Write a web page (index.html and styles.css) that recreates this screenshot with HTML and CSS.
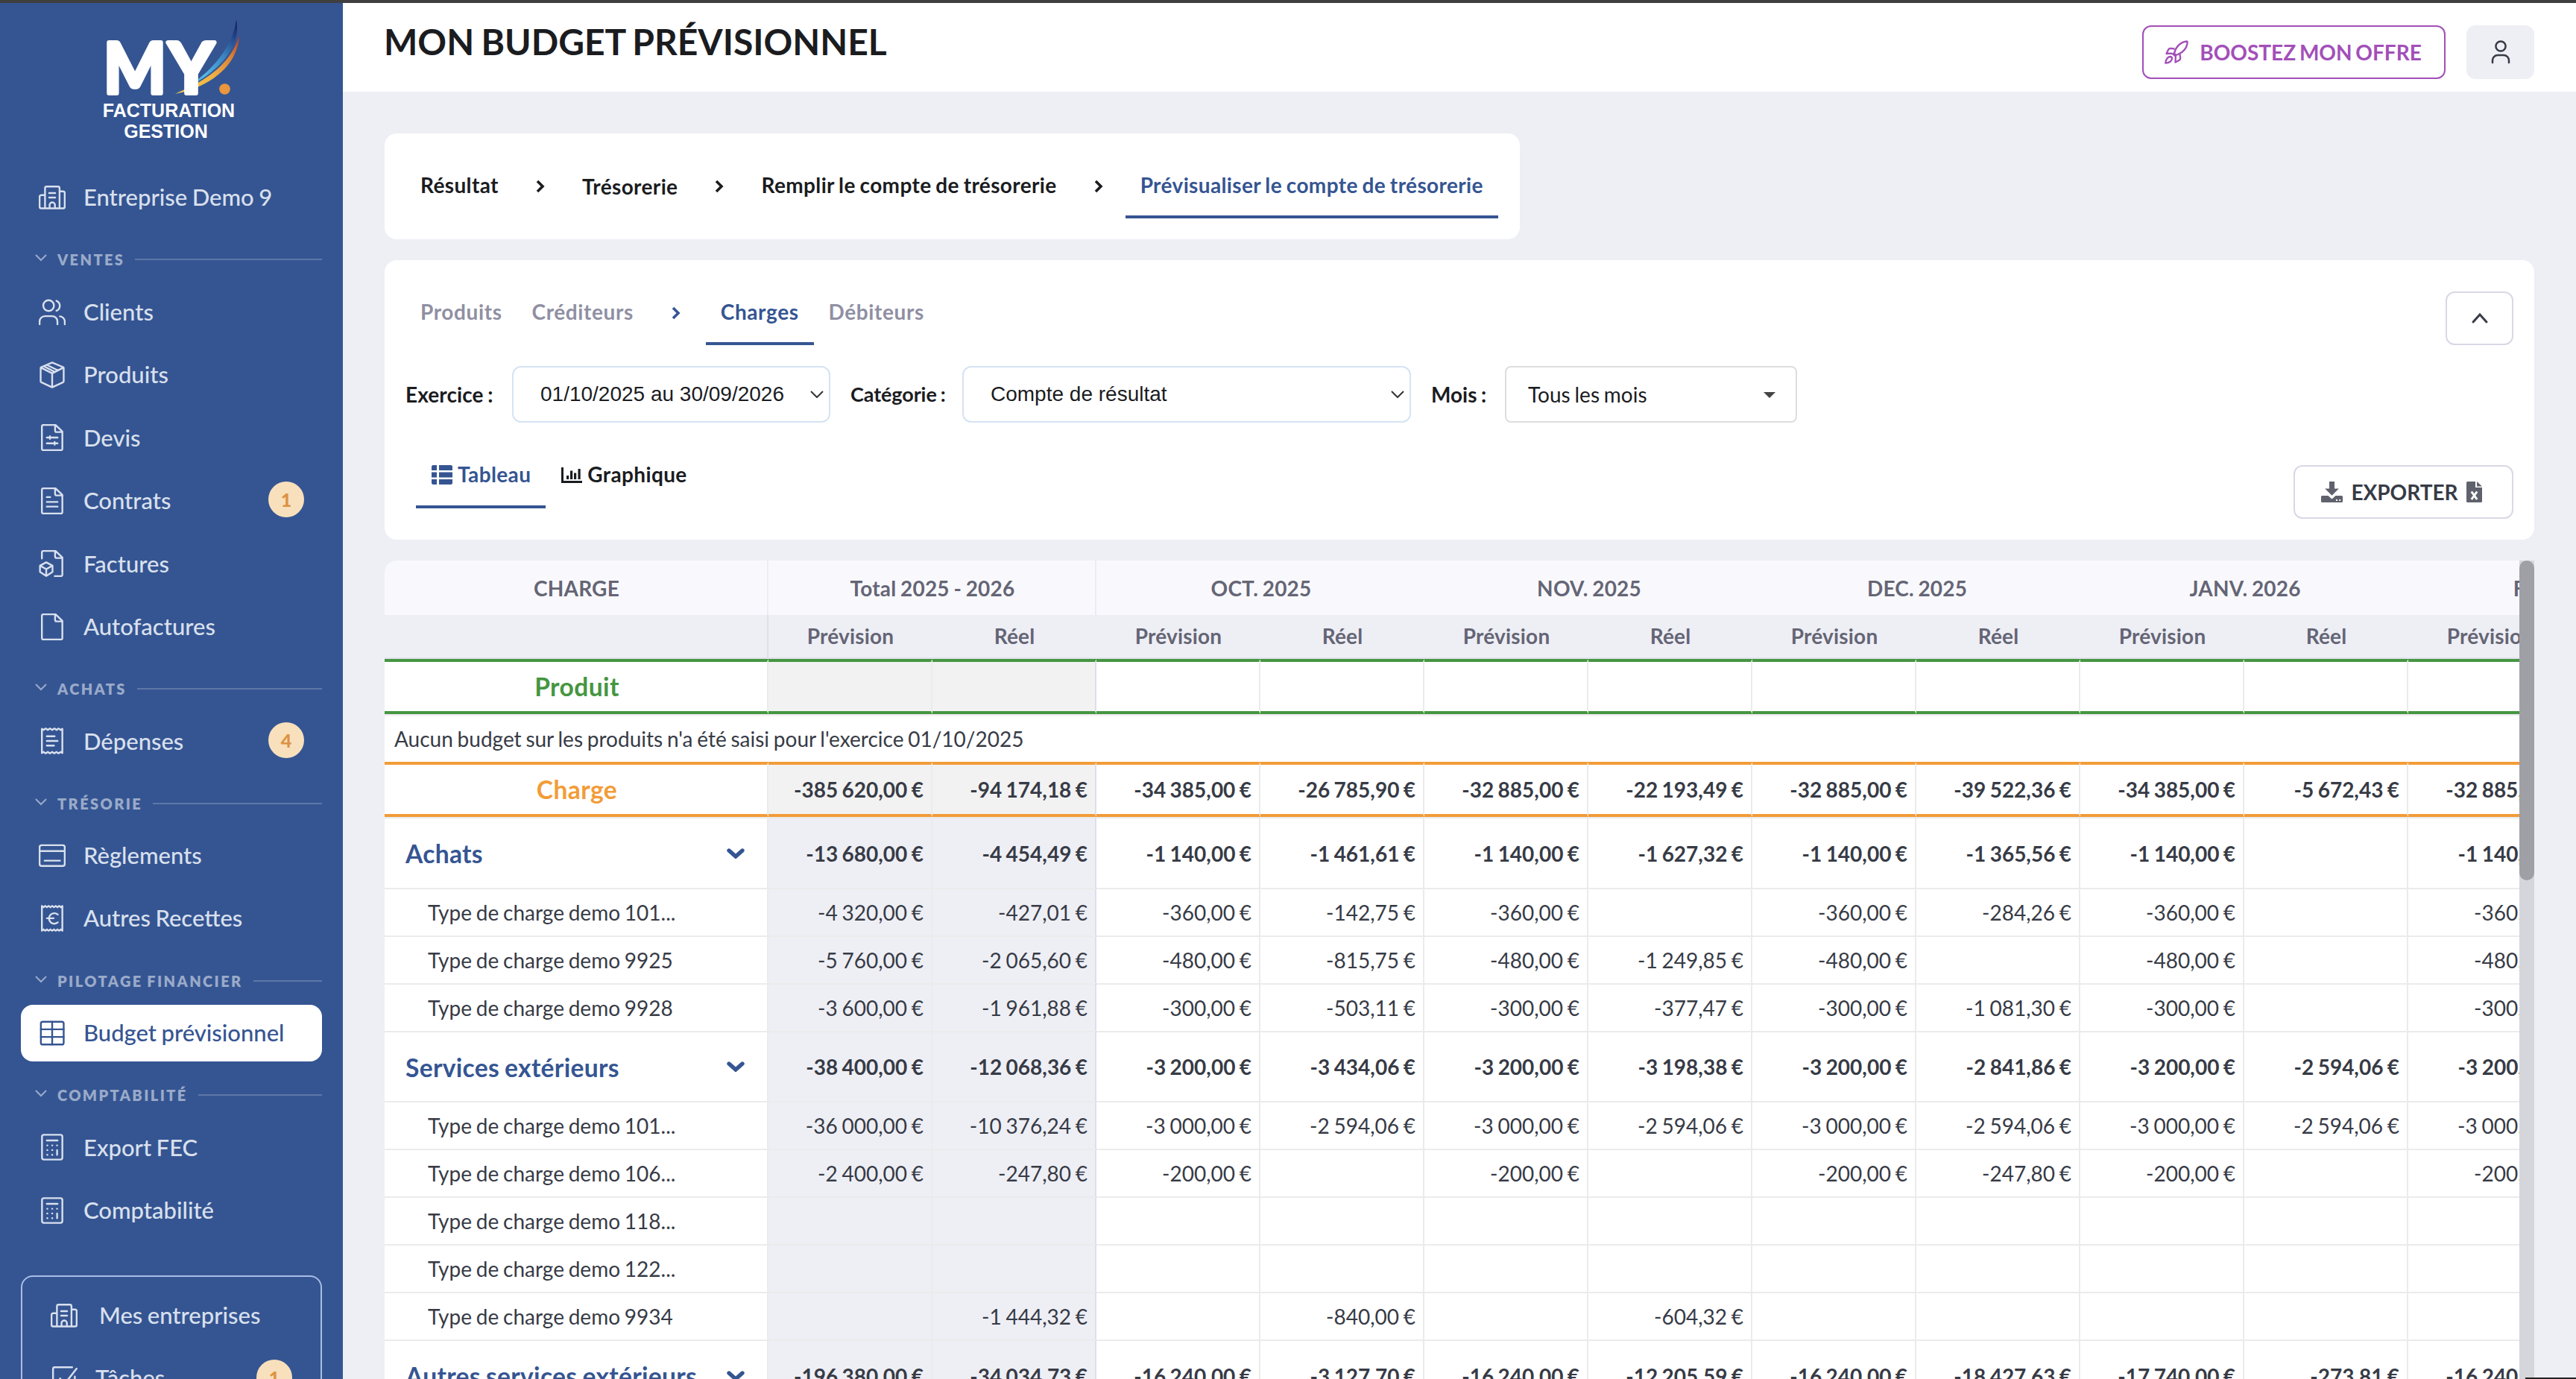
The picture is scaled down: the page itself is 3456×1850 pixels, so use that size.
FILE: index.html
```html
<!DOCTYPE html>
<html lang="fr">
<head>
    <meta charset="UTF-8">
    <meta name="viewport" content="width=device-width, initial-scale=1.0">
    <title>Mon budget prévisionnel</title>
    <link rel="stylesheet" href="styles.css">
</head>
<body>

<!-- Icons -->
<svg class="sprite" xmlns="http://www.w3.org/2000/svg">
    <symbol id="i-building" viewBox="0 0 24 24">
        <path d="M5.6 21.7V3.7a1.5 1.5 0 0 1 1.5-1.5h10a1.5 1.5 0 0 1 1.5 1.5v18M5.6 9.8H2.2A1.5 1.5 0 0 0 .75 11.3v8.9a1.5 1.5 0 0 0 1.5 1.5h19.5a1.5 1.5 0 0 0 1.5-1.5V8a1.5 1.5 0 0 0-1.5-1.5h-3.1M9.3 8h5.4M9.3 12h5.4M9.7 21.7v-3a2.4 2.4 0 0 1 4.8 0v3"/>
    </symbol>
    <symbol id="i-users" viewBox="0 0 24 24">
        <circle cx="8.8" cy="6" r="4.8"/>
        <path d="M.75 22.7v-2.5A4.8 4.8 0 0 1 5.5 15.4h6.4a4.8 4.8 0 0 1 4.8 4.8v2.5M15.8 1.7a4.8 4.8 0 0 1 0 8.9M18.9 15.6a4.8 4.8 0 0 1 4.4 4.8v2.3"/>
    </symbol>
    <symbol id="i-box" viewBox="0 0 24 24">
        <path d="M12 .9 21.7 5a.9.9 0 0 1 .6.9v11.8a1 1 0 0 1-.6.9L12 23.1l-9.7-4.5a1 1 0 0 1-.6-.9V5.900a.9.9 0 0 1 .6-.9zM1.900 5.400 12 10.600l10.100-5.200M12 10.600v12.300M17.300 8 7.200 3M14.500 9.400 4.500 4.200"/>
    </symbol>
    <symbol id="i-file" viewBox="0 0 24 24">
        <path d="M21.1 22.1a1.2 1.2 0 0 1-1.2 1.2H4a1.2 1.2 0 0 1-1.2-1.2V1.9A1.2 1.2 0 0 1 4 .75h11L21.1 6.6zM14.6.9v5a1.2 1.2 0 0 0 1.2 1.2h5.1"/>
    </symbol>
    <symbol id="i-quote" viewBox="0 0 24 24">
        <path d="M21.1 22.1a1.2 1.2 0 0 1-1.2 1.2H4a1.2 1.2 0 0 1-1.2-1.2V1.9A1.2 1.2 0 0 1 4 .75h11L21.1 6.6zM14.6.9v5a1.2 1.2 0 0 0 1.2 1.2h5.1M7.2 12h9.6M7.2 17.2h9.6M10 10.8v2.4M14.2 16v2.4"/>
    </symbol>
    <symbol id="i-contract" viewBox="0 0 24 24">
        <path d="M21.1 22.1a1.2 1.2 0 0 1-1.2 1.2H4a1.2 1.2 0 0 1-1.2-1.2V1.9A1.2 1.2 0 0 1 4 .75h11L21.1 6.6zM14.6.9v5a1.2 1.2 0 0 0 1.2 1.2h5.1M7.2 8.6h3M7.2 12.9h9.6M7.2 17.1h9.6"/>
    </symbol>
    <symbol id="i-invoice" viewBox="0 0 24 24">
        <path d="M2.8 7.5V1.9A1.2 1.2 0 0 1 4 .75h11l6.1 5.9v15.4a1.2 1.2 0 0 1-1.2 1.2h-5.6M14.6.9v5a1.2 1.2 0 0 0 1.2 1.2h5.1M6.7 10.9l5.6 3v5.6l-5.6 3.6-5.6-3.6v-5.6zM1.3 14l5.4 3 5.4-3M6.7 17v6"/>
    </symbol>
    <symbol id="i-receipt" viewBox="0 0 24 24">
        <path d="M2.8 1.2v21.6l1.5-1 1.9 1.3 1.9-1.3 1.9 1.3 2-1.3 1.9 1.3 1.9-1.3 1.9 1.3 1.9-1.3 1.5 1V1.2l-1.5 1L17.8.9l-1.9 1.3L14 .9l-2 1.3L10 .9 8.1 2.2 6.2.9 4.3 2.2zM7.2 7.8h7M7.2 12h9.6M7.2 16.2h6.4"/>
    </symbol>
    <symbol id="i-receipt-euro" viewBox="0 0 24 24">
        <path d="M2.8.9v22.2l1.5-1.2 1.5 1.2 1.5-1.2 1.5 1.2 1.6-1.2L12 23.1l1.6-1.2 1.6 1.2 1.5-1.2 1.5 1.2 1.5-1.2 1.4 1.2V.9l-1.4 1.2L18.2.9l-1.5 1.2L15.2.9l-1.6 1.2L12 .9l-1.6 1.2L8.8.9 7.3 2.1 5.8.9 4.3 2.1zM17 8.6a4.7 4.7 0 1 0 0 7M7.3 11.9h6"/>
    </symbol>
    <symbol id="i-card" viewBox="0 0 24 24">
        <rect x=".75" y="2.6" width="22.5" height="18.6" rx="1.8"/>
        <path d="M.75 7.8h22.5M5.2 16.4h13.8"/>
    </symbol>
    <symbol id="i-table" viewBox="0 0 24 24">
        <rect x="1.9" y="1.8" width="20.4" height="20.4" rx="1.6"/>
        <path d="M1.9 8.6h20.4M1.9 15.4h20.4M12 1.8v20.4"/>
    </symbol>
    <symbol id="i-calc" viewBox="0 0 24 24">
        <rect x="2.9" y=".9" width="18.2" height="22.2" rx="1.7"/>
        <path d="M7.2 6h9.6M7.6 10.4h.1M12 10.4h.1M16.3 10.4h.1M7.6 14.6h.1M12 14.6h.1M16.4 14.6v4.2M7.6 18.8h.1M12 18.8h.1"/>
    </symbol>
    <symbol id="i-task" viewBox="0 0 24 24">
        <path d="M21.6 10.5v11a1.5 1.5 0 0 1-1.5 1.5H3.6a1.5 1.5 0 0 1-1.5-1.5V3.7a1.5 1.5 0 0 1 1.5-1.5h15.6M23.2 3.4 12.2 17.4 8.4 12.2"/>
    </symbol>
    <symbol id="i-down" viewBox="0 0 16 10">
        <path d="M1.5 1.5 8 8l6.5-6.5"/>
    </symbol>
    <symbol id="i-next" viewBox="0 0 14 20">
        <path d="M3 3l7 7-7 7"/>
    </symbol>
    <symbol id="i-toggle" viewBox="0 0 24 14">
        <path d="M3 3l9 8 9-8"/>
    </symbol>
</svg>

<div class="top-line"></div>

<div class="app">

    <!-- Sidebar -->
    <aside class="sidebar">
        <svg class="logo" viewBox="0 0 200 180">
            <defs>
                <linearGradient id="blue" x1="0" y1="1" x2="1" y2="0">
                    <stop offset="0" stop-color="#4fa3b5"/>
                    <stop offset=".35" stop-color="#55b9e8"/>
                    <stop offset=".65" stop-color="#3a82c0"/>
                    <stop offset="1" stop-color="#141a60"/>
                </linearGradient>
                <linearGradient id="orange" x1="0" y1="1" x2="1" y2="0">
                    <stop offset="0" stop-color="#f3d04f"/>
                    <stop offset=".45" stop-color="#efb044"/>
                    <stop offset=".75" stop-color="#d98339"/>
                    <stop offset="1" stop-color="#b83a20"/>
                </linearGradient>
            </defs>
            <path fill="url(#blue)" d="M105 119C140 104 182 64 187 20c5 24-7 48-28 66-14 13-31 22-54 33z"/>
            <path fill="url(#orange)" d="M105 120C146 102 178 82 191 42c-2 38-36 68-86 78z"/>
            <text class="logo-my" x="9" y="119" textLength="84" lengthAdjust="spacingAndGlyphs">M</text>
            <text class="logo-my" x="96" y="119" textLength="61" lengthAdjust="spacingAndGlyphs">Y</text>
            <circle cx="171.5" cy="113.5" r="7.3" fill="#e9963f"/>
            <text class="logo-text" x="96.5" y="151" text-anchor="middle">FACTURATION</text>
            <text class="logo-text" x="92.5" y="178.5" text-anchor="middle">GESTION</text>
        </svg>

        <nav class="menu">
            <a class="item"><svg class="icon"><use href="#i-building"/></svg><span>Entreprise Demo 9</span></a>

            <div class="section"><svg class="caret"><use href="#i-down"/></svg><span>VENTES</span></div>
            <a class="item"><svg class="icon"><use href="#i-users"/></svg><span>Clients</span></a>
            <a class="item"><svg class="icon"><use href="#i-box"/></svg><span>Produits</span></a>
            <a class="item"><svg class="icon"><use href="#i-quote"/></svg><span>Devis</span></a>
            <a class="item"><svg class="icon"><use href="#i-contract"/></svg><span>Contrats</span><b class="badge">1</b></a>
            <a class="item"><svg class="icon"><use href="#i-invoice"/></svg><span>Factures</span></a>
            <a class="item"><svg class="icon"><use href="#i-file"/></svg><span>Autofactures</span></a>

            <div class="section"><svg class="caret"><use href="#i-down"/></svg><span>ACHATS</span></div>
            <a class="item"><svg class="icon"><use href="#i-receipt"/></svg><span>Dépenses</span><b class="badge">4</b></a>

            <div class="section"><svg class="caret"><use href="#i-down"/></svg><span>TRÉSORIE</span></div>
            <a class="item"><svg class="icon"><use href="#i-card"/></svg><span>Règlements</span></a>
            <a class="item"><svg class="icon"><use href="#i-receipt-euro"/></svg><span>Autres Recettes</span></a>

            <div class="section"><svg class="caret"><use href="#i-down"/></svg><span>PILOTAGE FINANCIER</span></div>
            <a class="item active"><svg class="icon"><use href="#i-table"/></svg><span>Budget prévisionnel</span></a>

            <div class="section"><svg class="caret"><use href="#i-down"/></svg><span>COMPTABILITÉ</span></div>
            <a class="item"><svg class="icon"><use href="#i-calc"/></svg><span>Export FEC</span></a>
            <a class="item"><svg class="icon"><use href="#i-calc"/></svg><span>Comptabilité</span></a>
        </nav>

        <nav class="menu-box">
            <a class="item wide"><svg class="icon"><use href="#i-building"/></svg><span>Mes entreprises</span></a>
            <a class="item"><svg class="icon"><use href="#i-task"/></svg><span>Tâches</span><b class="badge">1</b></a>
        </nav>
    </aside>

    <main class="main">
        <header class="header">
            <h1>MON BUDGET PRÉVISIONNEL</h1>
            <div class="header-actions">
                <button class="btn boost">
                    <svg class="rocket" viewBox="0 0 32 32">
                        <path d="M13 17.5C15 9 21 2.500 29.500 1.500c.8 0 1.200.4 1.200 1.200C30 11 24 17 15.500 20zM13.500 11.500l-5.500-.7c-1.500 0-2.700 1-3.200 2.400L2.500 18l7.500-.3M20.500 18.700l.7 5.300c0 1.500-1 2.700-2.300 3.300l-4.400 2.200.4-8.500M10.200 17.500l4.700 4M7.500 22c-3 .2-6 3.500-6.200 8.700 5.200-.2 8.600-3 8.700-6.200 0-1.600-1-2.500-2.500-2.500z"/>
                    </svg>
                    BOOSTEZ MON OFFRE
                </button>
                <button class="btn user">
                    <svg viewBox="0 0 28 32"><circle cx="14" cy="8" r="6.600"/><path d="M3 30v-3a7 7 0 0 1 7-7h8a7 7 0 0 1 7 7v3"/></svg>
                </button>
            </div>
        </header>

        <div class="content">

            <!-- Steps -->
            <div class="card steps">
                <a class="tab">Résultat</a>
                <svg class="next"><use href="#i-next"/></svg>
                <a class="tab low">Trésorerie</a>
                <svg class="next"><use href="#i-next"/></svg>
                <a class="tab">Remplir le compte de trésorerie</a>
                <svg class="next"><use href="#i-next"/></svg>
                <a class="tab selected">Prévisualiser le compte de trésorerie</a>
            </div>

            <!-- Filters -->
            <div class="card">
                <div class="card-row">
                    <div class="tabs muted">
                        <a class="tab">Produits</a>
                        <a class="tab">Créditeurs</a>
                        <svg class="next blue"><use href="#i-next"/></svg>
                        <a class="tab selected">Charges</a>
                        <a class="tab">Débiteurs</a>
                    </div>
                    <button class="btn collapse">
                        <svg viewBox="0 0 24 16"><path d="M3 13l9-10 9 10"/></svg>
                    </button>
                </div>

                <div class="filters">
                    <label class="label-year">Exercice :</label>
                    <div class="select select-year"><span>01/10/2025 au 30/09/2026</span><svg class="arrow" viewBox="0 0 18 10"><path d="M1 1l8 8 8-8"/></svg></div>
                    <label class="label-cat">Catégorie :</label>
                    <div class="select select-cat"><span>Compte de résultat</span><svg class="arrow" viewBox="0 0 18 10"><path d="M1 1l8 8 8-8"/></svg></div>
                    <label class="label-month">Mois :</label>
                    <div class="select select-month"><span>Tous les mois</span><i class="triangle"></i></div>
                </div>

                <div class="card-row views">
                    <div class="tabs">
                        <a class="tab selected">
                            <svg class="view-icon" viewBox="0 0 28 26"><path d="M1.500 0H7v7H0V1.500zM10 0h16.500L28 1.500V7H10zM0 9.500h7v7H0zM10 9.500h18v7H10zM0 19h7v7H1.500L0 24.500zM10 19h18v5.500L26.500 26H10z"/></svg>Tableau
                        </a>
                        <a class="tab">
                            <svg class="view-icon" viewBox="0 0 28 26"><path d="M0 3h3v18h25v3H0zM7 14h3.200v5H7zM12 7.500h3.200V19H12zM17 10.500h3.200V19H17zM22.500 5h3.200v14h-3.200z"/></svg>Graphique
                        </a>
                    </div>
                    <button class="btn export">
                        <svg class="download" viewBox="0 0 29 28"><path d="M11 0h7v9.500h5.800L14.500 18.800 5.200 9.500H11z"/><path fill-rule="evenodd" d="M1.500 19h8l5 4.600 5-4.600h8A1.500 1.500 0 0 1 29 20.500v6a1.500 1.500 0 0 1-1.500 1.500h-26A1.500 1.500 0 0 1 0 26.500v-6A1.500 1.500 0 0 1 1.500 19zM20 24v2h2v-2zm4.200 0v2h2v-2z"/></svg>
                        EXPORTER
                        <svg class="excel" viewBox="0 0 21 28"><path d="M1.500 0H12v8h9v18.500a1.500 1.500 0 0 1-1.500 1.500h-18A1.500 1.500 0 0 1 0 26.500v-25A1.500 1.500 0 0 1 1.500 0zM14 0l7 6.500h-7z"/><path class="excel-x" d="M6.800 13.500l7.400 10.500M14.200 13.500 6.800 24"/></svg>
                    </button>
                </div>
            </div>

            <!-- Budget table -->
            <div class="table-box">
                <div class="table-scroll">
                    <table>
                        <colgroup>
                            <col class="col-name"><col class="col-prev"><col class="col-real"><col span="10" class="col-month">
                        </colgroup>
                        <thead>
                            <tr class="months">
                                <th>CHARGE</th><th colspan="2">Total 2025 - 2026</th><th colspan="2">OCT. 2025</th><th colspan="2">NOV. 2025</th><th colspan="2">DEC. 2025</th><th colspan="2">JANV. 2026</th><th colspan="2">FÉVR. 2026</th>
                            </tr>
                            <tr class="kinds">
                                <th></th><th>Prévision</th><th>Réel</th><th>Prévision</th><th>Réel</th><th>Prévision</th><th>Réel</th><th>Prévision</th><th>Réel</th><th>Prévision</th><th>Réel</th><th>Prévision</th><th>Réel</th>
                            </tr>
                        </thead>
                        <tbody>
                            <tr class="total product">
                                <th>Produit</th><td></td><td></td><td></td><td></td><td></td><td></td><td></td><td></td><td></td><td></td><td></td><td></td>
                            </tr>
                            <tr class="empty">
                                <td colspan="13">Aucun budget sur les produits n'a été saisi pour l'exercice 01/10/2025</td>
                            </tr>
                            <tr class="total charge">
                                <th>Charge</th><td>-385 620,00 €</td><td>-94 174,18 €</td><td>-34 385,00 €</td><td>-26 785,90 €</td><td>-32 885,00 €</td><td>-22 193,49 €</td><td>-32 885,00 €</td><td>-39 522,36 €</td><td>-34 385,00 €</td><td>-5 672,43 €</td><td>-32 885,00 €</td><td></td>
                            </tr>
                            <tr class="group">
                                <th><div class="group-name">Achats<svg><use href="#i-toggle"/></svg></div></th><td>-13 680,00 €</td><td>-4 454,49 €</td><td>-1 140,00 €</td><td>-1 461,61 €</td><td>-1 140,00 €</td><td>-1 627,32 €</td><td>-1 140,00 €</td><td>-1 365,56 €</td><td>-1 140,00 €</td><td></td><td>-1 140,00 €</td><td></td>
                            </tr>
                            <tr>
                                <th>Type de charge demo 101...</th><td>-4 320,00 €</td><td>-427,01 €</td><td>-360,00 €</td><td>-142,75 €</td><td>-360,00 €</td><td></td><td>-360,00 €</td><td>-284,26 €</td><td>-360,00 €</td><td></td><td>-360,00 €</td><td></td>
                            </tr>
                            <tr>
                                <th>Type de charge demo 9925</th><td>-5 760,00 €</td><td>-2 065,60 €</td><td>-480,00 €</td><td>-815,75 €</td><td>-480,00 €</td><td>-1 249,85 €</td><td>-480,00 €</td><td></td><td>-480,00 €</td><td></td><td>-480,00 €</td><td></td>
                            </tr>
                            <tr>
                                <th>Type de charge demo 9928</th><td>-3 600,00 €</td><td>-1 961,88 €</td><td>-300,00 €</td><td>-503,11 €</td><td>-300,00 €</td><td>-377,47 €</td><td>-300,00 €</td><td>-1 081,30 €</td><td>-300,00 €</td><td></td><td>-300,00 €</td><td></td>
                            </tr>
                            <tr class="group short">
                                <th><div class="group-name">Services extérieurs<svg><use href="#i-toggle"/></svg></div></th><td>-38 400,00 €</td><td>-12 068,36 €</td><td>-3 200,00 €</td><td>-3 434,06 €</td><td>-3 200,00 €</td><td>-3 198,38 €</td><td>-3 200,00 €</td><td>-2 841,86 €</td><td>-3 200,00 €</td><td>-2 594,06 €</td><td>-3 200,00 €</td><td></td>
                            </tr>
                            <tr>
                                <th>Type de charge demo 101...</th><td>-36 000,00 €</td><td>-10 376,24 €</td><td>-3 000,00 €</td><td>-2 594,06 €</td><td>-3 000,00 €</td><td>-2 594,06 €</td><td>-3 000,00 €</td><td>-2 594,06 €</td><td>-3 000,00 €</td><td>-2 594,06 €</td><td>-3 000,00 €</td><td></td>
                            </tr>
                            <tr>
                                <th>Type de charge demo 106...</th><td>-2 400,00 €</td><td>-247,80 €</td><td>-200,00 €</td><td></td><td>-200,00 €</td><td></td><td>-200,00 €</td><td>-247,80 €</td><td>-200,00 €</td><td></td><td>-200,00 €</td><td></td>
                            </tr>
                            <tr>
                                <th>Type de charge demo 118...</th><td></td><td></td><td></td><td></td><td></td><td></td><td></td><td></td><td></td><td></td><td></td><td></td>
                            </tr>
                            <tr>
                                <th>Type de charge demo 122...</th><td></td><td></td><td></td><td></td><td></td><td></td><td></td><td></td><td></td><td></td><td></td><td></td>
                            </tr>
                            <tr>
                                <th>Type de charge demo 9934</th><td></td><td>-1 444,32 €</td><td></td><td>-840,00 €</td><td></td><td>-604,32 €</td><td></td><td></td><td></td><td></td><td></td><td></td>
                            </tr>
                            <tr class="group">
                                <th><div class="group-name">Autres services extérieurs<svg><use href="#i-toggle"/></svg></div></th><td>-196 380,00 €</td><td>-34 034,73 €</td><td>-16 240,00 €</td><td>-3 127,70 €</td><td>-16 240,00 €</td><td>-12 205,59 €</td><td>-16 240,00 €</td><td>-18 427,63 €</td><td>-17 740,00 €</td><td>-273,81 €</td><td>-16 240,00 €</td><td></td>
                            </tr>
                        </tbody>
                    </table>
                </div>
                <div class="scrollbar"><div class="thumb"></div></div>
            </div>
        </div>
    </main>
</div>

<div class="corner"></div>

</body>
</html>
```

FILE: styles.css
```css
/* General styles */
* {
    box-sizing: border-box;
}

body {
    margin: 0;
    height: 1850px;
    overflow: hidden;
    background-color: #eeeff5;
    color: #373b46;
    font-family: Lato, sans-serif;
    font-size: 28px;
    line-height: 1.2;
    word-spacing: -1.4px;
}

svg {
    display: block;
    flex-shrink: 0;
}

.sprite {
    display: none;
}

.top-line {
    height: 4px;
    background-color: #3f3f3f;
}

.app {
    display: flex;
    height: 1846px;
    overflow: hidden;
}

/* Sidebar */
.sidebar {
    width: 460px;
    flex-shrink: 0;
    height: 1846px;
    overflow: hidden;
    padding: 0 28px;
    background-color: #355592;
    color: #d9e0ee;
}

.logo {
    width: 200px;
    height: 184px;
    margin: 0 0 39px 102px;
    overflow: visible;
}

.logo-my {
    font-family: Lato, sans-serif;
    font-size: 94px;
    font-weight: 700;
    fill: #fff;
    stroke: #fff;
    stroke-width: 6px;
    stroke-linejoin: round;
}

.logo-text {
    font-family: "Liberation Sans", Arial, sans-serif;
    font-size: 25px;
    font-weight: bold;
    fill: #fff;
}

.item {
    display: flex;
    align-items: center;
    gap: 24px;
    height: 76px;
    margin-bottom: 8.4px;
    padding: 0 24px;
    border-radius: 16px;
    font-size: 31px;
    font-weight: 500;
}

.item.active {
    background-color: #fff;
    color: #355592;
}

.icon {
    width: 36px;
    height: 36px;
    fill: none;
    stroke: currentColor;
    stroke-width: 1.6;
    stroke-linecap: round;
    stroke-linejoin: round;
}

.badge {
    width: 48px;
    height: 48px;
    margin: 0 0 3px auto;
    border-radius: 50%;
    background-color: #f8e0bc;
    color: #dd9344;
    font-size: 25px;
    font-weight: 900;
    line-height: 48px;
    text-align: center;
}

.section {
    display: flex;
    align-items: center;
    height: 69.2px;
    padding: 5px 0 0 19px;
    color: #9aaac9;
    font-size: 20px;
    font-weight: 800;
    letter-spacing: 2.4px;
}

.section::after {
    content: "";
    flex: 1;
    height: 2px;
    margin-left: 14px;
    background-color: #5d77a8;
}

.caret {
    width: 16px;
    height: 10px;
    margin: 0 14px 4px 0;
    fill: none;
    stroke: currentColor;
    stroke-width: 2;
    stroke-linecap: round;
}

.menu-box {
    height: 300px;
    margin-top: 49px;
    padding: 14px 14px;
    border: 2px solid #a9bde6;
    border-radius: 16px;
}

.menu-box .wide {
    gap: 29px;
}

/* Header */
.main {
    flex: 1;
    min-width: 0;
}

.header {
    display: flex;
    justify-content: space-between;
    height: 119px;
    padding: 30px 56px 0 55px;
    background-color: #fff;
}

.header h1 {
    margin: -7px 0 0;
    color: #1b1c1f;
    font-size: 48px;
    font-weight: 700;
    line-height: 58px;
    word-spacing: -2.4px;
}

.header-actions {
    display: flex;
    gap: 28px;
}

.btn {
    display: flex;
    align-items: center;
    justify-content: center;
    height: 72px;
    padding: 0;
    border: 2px solid #dad8e6;
    border-radius: 12px;
    background-color: #fff;
    color: #373b46;
    font-family: Lato, sans-serif;
    font-size: 28px;
    font-weight: 700;
    word-spacing: -1.4px;
}

.boost {
    width: 407px;
    gap: 15px;
    padding-right: 2px;
    border-color: #a24fb8;
    color: #a24fb8;
    word-spacing: -2px;
}

.rocket {
    width: 32px;
    height: 32px;
    fill: none;
    stroke: currentColor;
    stroke-width: 2.3;
    stroke-linejoin: round;
}

.user {
    width: 91px;
    border-color: #eeeff5;
    background-color: #eeeff5;
}

.user svg,
.collapse svg {
    width: 28px;
    height: 32px;
    fill: none;
    stroke: #373b46;
    stroke-width: 2.5;
    stroke-linecap: round;
}

/* Cards */
.content {
    padding: 56px 56px 0;
}

.card {
    margin-bottom: 28px;
    padding: 28px;
    border-radius: 16px;
    background-color: #fff;
}

.steps {
    display: flex;
    width: 1523px;
    color: #1b1c1f;
}

.card-row {
    display: flex;
    justify-content: space-between;
}

.tabs {
    display: flex;
}

.tab {
    display: flex;
    align-items: center;
    height: 86px;
    padding: 1px 20px 0;
    border-bottom: 4px solid transparent;
    font-weight: 700;
    letter-spacing: 0.37px;
    white-space: nowrap;
}

.tab.low {
    padding-top: 5px;
}

.muted .tab {
    color: #8f8fa3;
    letter-spacing: 0.6px;
}

.tab.selected,
.muted .tab.selected {
    border-color: #355592;
    color: #355592;
}

.next {
    width: 14px;
    height: 20px;
    margin: 33px 29px 0;
    fill: none;
    stroke: #1b1c1f;
    stroke-width: 3.6;
}

.next.blue {
    margin: 33px 33px 0 30px;
    stroke: #355592;
}

.collapse {
    width: 91px;
    margin-top: 14px;
}

.collapse svg {
    width: 24px;
    height: 16px;
    stroke-width: 3;
}

/* Filters */
.filters {
    display: flex;
    align-items: center;
    margin: 28px 0 29px;
    color: #1b1c1f;
}

.filters label {
    flex-shrink: 0;
    padding-top: 1px;
    font-size: 28px;
    font-weight: 700;
    white-space: nowrap;
}

.filters .label-year {
    width: 143px;
    letter-spacing: 0.1px;
}

.filters .label-cat {
    width: 177px;
    padding-left: 27px;
    font-size: 27px;
    letter-spacing: -0.1px;
}

.filters .label-month {
    width: 126px;
    padding-left: 27px;
}

.select {
    display: flex;
    align-items: center;
    justify-content: space-between;
    height: 76px;
    border: 2px solid #d5e3f3;
    border-radius: 12px;
    background-color: #fff;
    font-family: "Liberation Sans", Arial, sans-serif;
    word-spacing: 0;
}

.select-year {
    width: 427px;
    padding: 0 7px 0 36px;
}

.select-cat {
    width: 602px;
    padding: 0 7px 0 36px;
}

.select-month {
    width: 392px;
    padding: 1px 27px 0 29px;
    border-color: #ddd;
    border-radius: 8px;
    font-family: Lato, sans-serif;
    word-spacing: -1.4px;
}

.arrow {
    width: 18px;
    height: 10px;
    fill: none;
    stroke: #333;
    stroke-width: 2;
}

.triangle {
    border: 8px solid transparent;
    border-top: 8px solid #444;
    border-bottom: 0;
}

.views {
    height: 100px;
    padding-left: 14px;
    color: #1b1c1f;
}

.views .tab {
    padding: 0 20px 0 21px;
}

.view-icon {
    width: 28px;
    height: 26px;
    margin-right: 7px;
    fill: currentColor;
}

.export {
    width: 295px;
    align-self: flex-end;
    gap: 11px;
    padding-right: 5px;
}

.download {
    width: 29px;
    height: 28px;
    fill: #5f626c;
}

.excel {
    width: 21px;
    height: 28px;
    fill: #5f626c;
}

.excel-x {
    stroke: #fff;
    stroke-width: 3;
}

/* Budget table */
.table-box {
    display: flex;
    height: 1200px;
    border-radius: 16px 0 0 0;
    overflow: hidden;
}

.table-scroll {
    width: 2864px;
    overflow: hidden;
}

table {
    width: 3155px;
    table-layout: fixed;
    border-collapse: separate;
    border-spacing: 0;
}

.col-name {
    width: 515px;
}

.col-prev {
    width: 220px;
}

.col-real,
.col-month {
    width: 220px;
}

th,
td {
    height: 64px;
    padding: 2px 0 0;
    border-top: 2px solid #ebebeb;
    border-right: 2px solid #ebebeb;
    background-color: #fff;
    white-space: nowrap;
}

td {
    padding-right: 10px;
    text-align: right;
}

tbody th {
    padding-left: 58px;
    font-weight: 400;
    text-align: left;
}

td:nth-child(2),
td:nth-child(3) {
    background-color: #eeeff5;
}

td:nth-child(3) {
    border-right-color: #dfdfeb;
}

thead th {
    padding-left: 2px;
    border-top: 0;
    border-right: 0;
    color: #656575;
    font-weight: 700;
    letter-spacing: 0.2px;
}

.months th {
    height: 73px;
    background-color: #f9f9fd;
}

.months th:nth-child(-n+2) {
    border-right: 2px solid #ecedf3;
}

.months th:last-child {
    padding: 2px 6px 0 0;
    letter-spacing: 0.6px;
}

.kinds th {
    height: 59px;
    padding: 0;
    border-bottom: 2px solid #e0e1e9;
    background-color: #eeeff5;
}

.kinds th:first-child {
    border-right: 2px solid #dedfe8;
}

.total th,
.total td {
    height: 74px;
    border-top: 4px solid #459641;
    border-bottom: 4px solid #459641;
    font-weight: 700;
}

.total th {
    padding: 0 0 0 3px;
    color: #459641;
    font-size: 33.6px;
    letter-spacing: 0.4px;
    text-align: center;
}

.total.charge th,
.total.charge td {
    border-top-color: #f29c38;
    border-bottom-color: #f29c38;
}

.total.charge th {
    color: #f29c38;
}

.total td:nth-child(2),
.total td:nth-child(3) {
    background-color: #f2f2f2;
}

.empty td {
    padding-left: 13px;
    text-align: left;
}

.group th,
.group td {
    height: 95px;
    font-weight: 700;
}

.group.short th,
.group.short td {
    height: 94px;
}

.group th {
    padding: 2px 30px 0 28px;
    color: #355592;
    font-size: 33.6px;
    letter-spacing: 0.3px;
}

.group-name {
    display: flex;
    align-items: center;
    justify-content: space-between;
}

.group-name svg {
    width: 24px;
    height: 14px;
    margin-bottom: 2px;
    fill: none;
    stroke: #355592;
    stroke-width: 5.4;
    stroke-linecap: round;
}

.scrollbar {
    width: 20px;
    background-color: #d5d6db;
}

.thumb {
    height: 429px;
    border-radius: 10px;
    background-color: #9fa0a5;
}

/* Window edge, bottom right */
.corner {
    position: absolute;
    right: 0;
    bottom: 0;
    width: 68px;
    height: 2px;
    background-color: #222;
}
```
